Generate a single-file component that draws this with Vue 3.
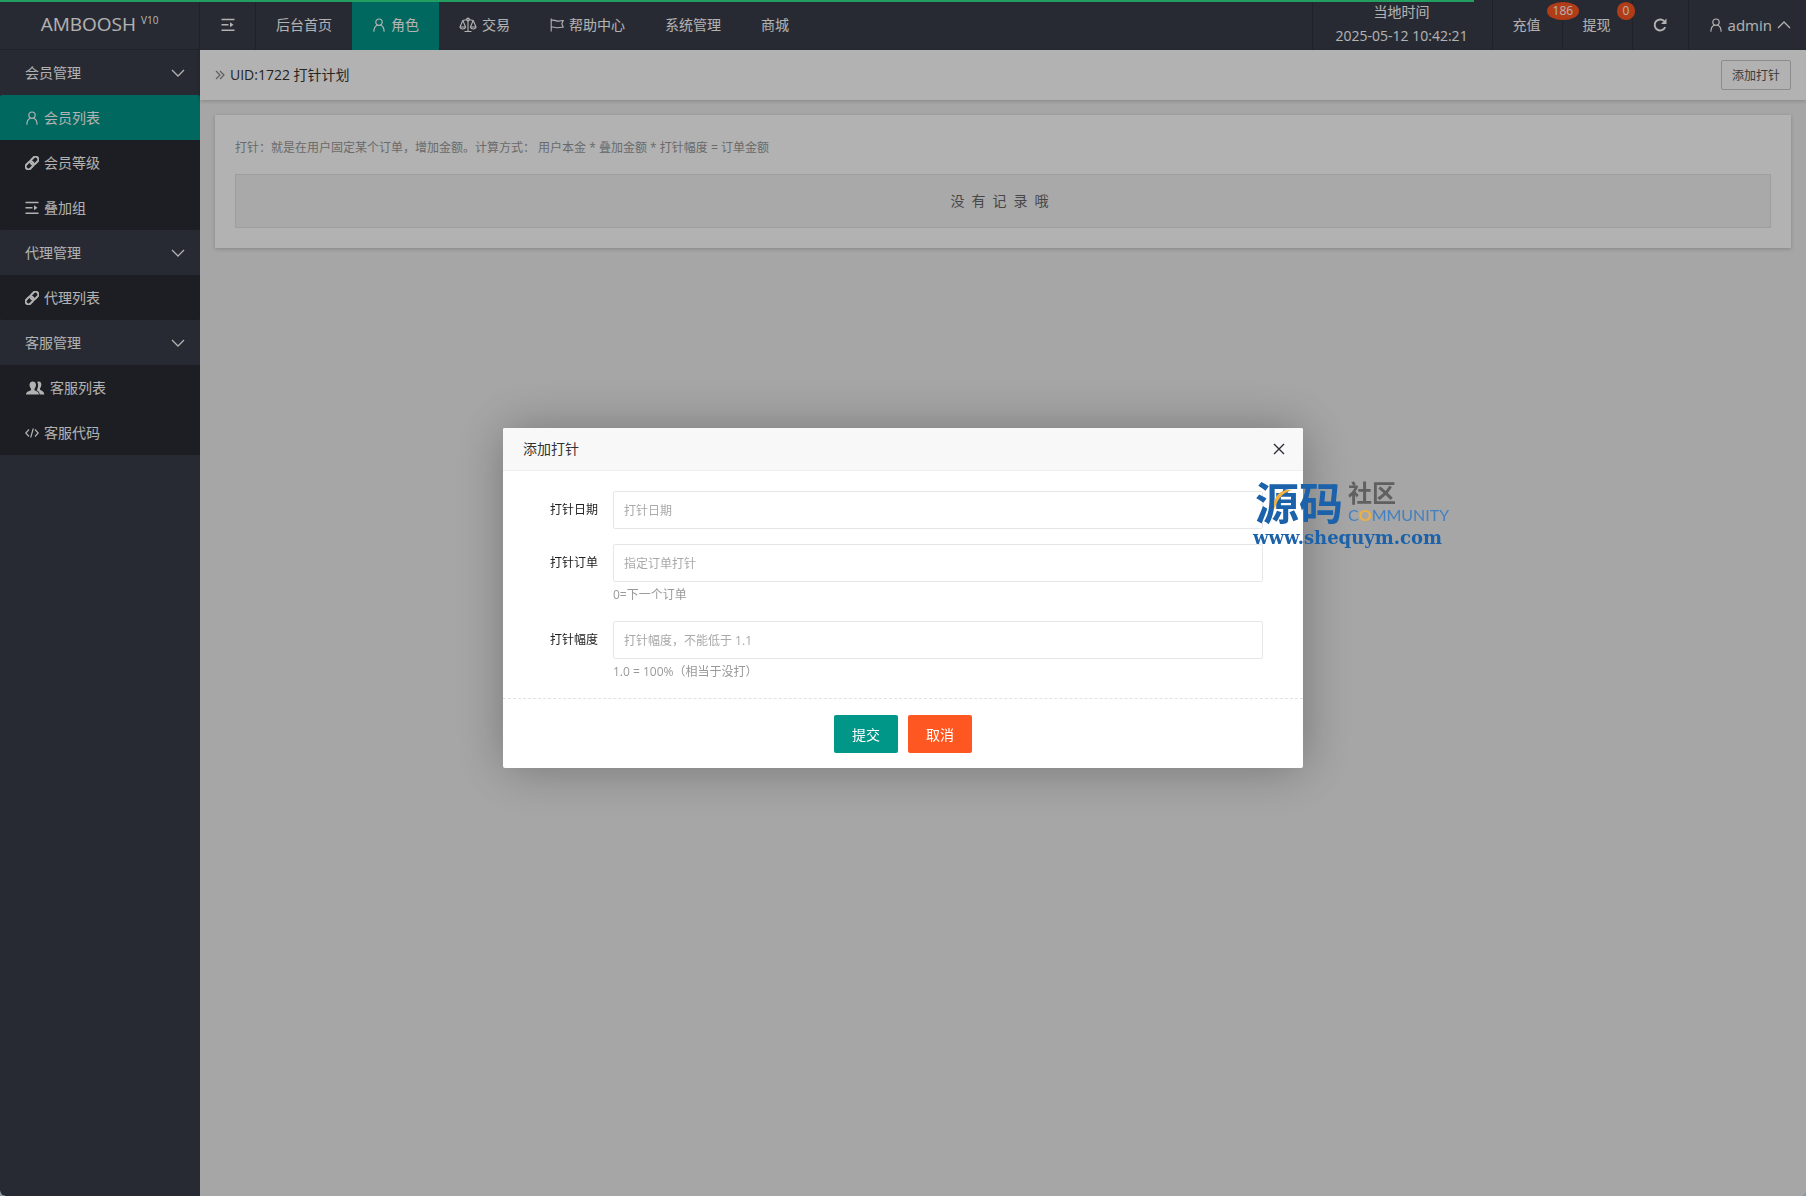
<script setup>
import { ref } from 'vue'

const topNav = [
  { text: '后台首页' },
  { text: '角色', icon: 'user', active: true },
  { text: '交易', icon: 'scale' },
  { text: '帮助中心', icon: 'flag' },
  { text: '系统管理' },
  { text: '商城' }
]

const sideNav = [
  {
    title: '会员管理',
    items: [
      { text: '会员列表', icon: 'user', active: true },
      { text: '会员等级', icon: 'link' },
      { text: '叠加组', icon: 'indent' }
    ]
  },
  {
    title: '代理管理',
    items: [{ text: '代理列表', icon: 'link' }]
  },
  {
    title: '客服管理',
    items: [
      { text: '客服列表', icon: 'group' },
      { text: '客服代码', icon: 'code' }
    ]
  }
]

const fields = [
  { id: 'date', label: '打针日期', placeholder: '打针日期' },
  { id: 'order', label: '打针订单', placeholder: '指定订单打针', hint: '0=下一个订单' },
  { id: 'rate', label: '打针幅度', placeholder: '打针幅度，不能低于 1.1', hint: '1.0 = 100%（相当于没打）' }
]

const form = ref({ date: '', order: '', rate: '' })
</script>

<template>
  <svg class="sprite" aria-hidden="true">
    <symbol id="i-user" viewBox="0 0 14 14">
      <g fill="none" stroke="currentColor" stroke-width="1.2">
        <circle cx="7" cy="4.2" r="3.2" />
        <path d="M5.2 7.2C3.200 8 2 10.200 1.900 13.200M8.800 7.200C10.800 8 12 10.200 12.100 13.200" stroke-linecap="round" />
      </g>
    </symbol>
    <symbol id="i-indent" viewBox="0 0 14 14">
      <path d="M.5 1.500H13.500M.5 6.800H7.500M.5 12.200H13.500" fill="none" stroke="currentColor" stroke-width="1.600" />
      <path d="M9 4.300L12.500 6.800L9 9.300Z" fill="currentColor" />
    </symbol>
    <symbol id="i-scale" viewBox="0 0 18 16">
      <g fill="none" stroke="currentColor" stroke-width="1.100" stroke-linejoin="round">
        <path d="M9 1V14M5.500 14.500H12.500M3.500 3.500L7.500 2.800M14.500 3.500L10.500 2.800" />
        <circle cx="9" cy="2.500" r="1.400" />
        <path d="M3.800 3.500L1 10H6.600ZM14.200 3.500L11.400 10H17Z" />
        <path d="M1 10Q1.500 12 3.800 12T6.600 10M11.400 10Q12 12 14.200 12T17 10" />
      </g>
    </symbol>
    <symbol id="i-flag" viewBox="0 0 14 14">
      <path d="M1.200 .5V13.500M1.500 2.500C4.500 1 6.500 4 9.500 3Q11.500 2.300 13.300 2.500L11.800 5.800L13.300 9.300C9.500 8.700 8.500 10.500 5.500 9.500Q3 8.600 1.500 9.200" fill="none" stroke="currentColor" stroke-width="1.100" stroke-linejoin="round" />
    </symbol>
    <symbol id="i-link" viewBox="0 0 14 14">
      <g fill="none" stroke="currentColor" stroke-width="2" transform="rotate(-45 7 7)">
        <rect x="-.8" y="4.200" width="8.800" height="5.600" rx="2.800" />
        <rect x="6" y="4.200" width="8.800" height="5.600" rx="2.800" />
      </g>
    </symbol>
    <symbol id="i-group" viewBox="0 0 20 14">
      <g fill="currentColor">
        <path d="M12.200 1C14.500 -.3 16.600 1.200 16.300 4C16.200 5.600 15.600 6.500 15 7.400V8.600C16 9.800 19 10 19.300 13.500H14.700C14.500 11.200 13.300 10.200 11.600 9.300C13 7 13.800 3.500 12.200 1Z" />
        <path d="M4.500 4C4.300 -.8 11.200 -.8 11 4C10.900 5.800 10.200 7 9.500 7.800V9C10.500 10.200 13.700 10 14 13.500H1C1.300 10 5 10.200 6 9V7.800C5.300 7 4.600 5.800 4.500 4Z" />
      </g>
    </symbol>
    <symbol id="i-code" viewBox="0 0 14 14">
      <path d="M4 3.500L.8 7L4 10.500M10 3.500L13.200 7L10 10.500M8.300 2.500L5.700 11.500" fill="none" stroke="currentColor" stroke-width="1.200" />
    </symbol>
    <symbol id="i-refresh" viewBox="0 0 14 14">
      <path d="M12.200 9.200A5.500 5.500 0 1 1 11.200 3.200" fill="none" stroke="currentColor" stroke-width="1.900" />
      <path d="M13.500 .5V6H8Z" fill="currentColor" />
    </symbol>
    <symbol id="i-down" viewBox="0 0 14 14">
      <path d="M1 4L7 10L13 4" fill="none" stroke="currentColor" stroke-width="1.300" />
    </symbol>
    <symbol id="i-up" viewBox="0 0 14 14">
      <path d="M1 10L7 4L13 10" fill="none" stroke="currentColor" stroke-width="1.300" />
    </symbol>
  </svg>

  <div class="admin">
    <aside class="side">
      <a class="logo" href="#">AMBOOSH <sup>V10</sup></a>
      <nav>
        <section v-for="group in sideNav" :key="group.title">
          <button type="button" class="side-title">
            {{ group.title }}
            <svg class="icon"><use href="#i-down" /></svg>
          </button>
          <div class="side-items">
            <a v-for="item in group.items" :key="item.text" href="#" class="side-link" :class="{ active: item.active }">
              <svg class="icon" :class="item.icon"><use :href="'#i-' + item.icon" /></svg>
              {{ item.text }}
            </a>
          </div>
        </section>
      </nav>
    </aside>

    <div class="main">
      <header class="header">
        <button type="button" class="toggle" aria-label="menu">
          <svg class="icon"><use href="#i-indent" /></svg>
        </button>
        <nav class="top-nav">
          <a v-for="item in topNav" :key="item.text" href="#" class="top-link" :class="{ active: item.active }">
            <svg v-if="item.icon" class="icon" :class="item.icon"><use :href="'#i-' + item.icon" /></svg>
            {{ item.text }}
          </a>
        </nav>
        <div class="tools">
          <div class="tool clock">
            <span>当地时间</span>
            <time>2025-05-12 10:42:21</time>
          </div>
          <a href="#" class="tool">充值<span class="badge">186</span></a>
          <a href="#" class="tool">提现<span class="badge">0</span></a>
          <button type="button" class="tool" aria-label="refresh">
            <svg class="icon"><use href="#i-refresh" /></svg>
          </button>
          <a href="#" class="tool account">
            <svg class="icon"><use href="#i-user" /></svg>
            admin
            <svg class="icon"><use href="#i-up" /></svg>
          </a>
        </div>
      </header>

      <div class="title-bar">
        <h1>
          <svg class="arrows" viewBox="0 0 10 10"><path d="M1 1L5 5L1 9M5 1L9 5L5 9" /></svg>
          UID:1722 打针计划
        </h1>
        <button type="button" class="add">添加打针</button>
      </div>

      <section class="panel">
        <p class="note">打针：就是在用户固定某个订单，增加金额。计算方式： 用户本金 * 叠加金额 * 打针幅度 = 订单金额</p>
        <div class="empty">没有记录哦</div>
      </section>
    </div>

    <div class="shade">
      <div class="dialog" role="dialog" aria-labelledby="dialog-title">
        <div class="dialog-head">
          <h2 id="dialog-title">添加打针</h2>
          <button type="button" class="close" aria-label="close">
            <svg viewBox="0 0 12 12"><path d="M1 1L11 11M11 1L1 11" /></svg>
          </button>
        </div>
        <form @submit.prevent>
          <div class="fields">
            <div v-for="f in fields" :key="f.id" class="field">
              <label :for="f.id">{{ f.label }}</label>
              <div class="control">
                <input :id="f.id" v-model="form[f.id]" type="text" :placeholder="f.placeholder">
                <p v-if="f.hint" class="hint">{{ f.hint }}</p>
              </div>
            </div>
          </div>
          <div class="actions">
            <button type="submit" class="btn">提交</button>
            <button type="button" class="btn danger">取消</button>
          </div>
        </form>

        <div class="watermark">
          <div class="mark-row">
            <strong class="mark-name">源码</strong>
            <div class="mark-side">
              <span class="mark-sub">社区</span>
              <span class="mark-en">C<b>O</b>MMUNITY</span>
            </div>
          </div>
          <span class="mark-url">www.shequym.com</span>
          <svg class="swoosh" viewBox="0 0 24 24"><path d="M20 2C7 0 -1 12 3 22C3.500 14 9 5 20 2Z" /></svg>
        </div>
      </div>
    </div>
    <div class="progress"></div>
  </div>
</template>

<style>
body {
  margin: 0;
  background: #8796a3;
}
</style>

<style scoped>
.sprite { position: absolute; width: 0; height: 0; }

.admin {
  position: relative;
  display: flex;
  min-height: 100vh;
  overflow: hidden;
  border-radius: 0 0 6px 6px;
  background: #eee;
  color: #333;
  font: 14px/24px "Open Sans", "Noto Sans CJK SC", sans-serif;
}

a { color: inherit; text-decoration: none; }
button, input { font-family: inherit; }
h1, h2, p { margin: 0; font-weight: 400; }
.icon { flex: none; width: 14px; height: 14px; }
.icon.scale { width: 18px; height: 16px; }
.icon.group { width: 20px; }

/* sidebar */
.side { flex: none; width: 200px; background: #393d49; color: #fff; }
.logo {
  display: block;
  box-sizing: border-box;
  height: 50px;
  border-right: 1px solid #2f323c;
  border-bottom: 1px solid #2f323c;
  font-size: 19px;
  line-height: 48px;
  text-align: center;
}
.logo sup { font-size: 10px; line-height: 0; }
.side-title {
  display: flex;
  align-items: center;
  justify-content: space-between;
  width: 100%;
  height: 45px;
  padding: 0 15px 0 25px;
  border: 0;
  background: none;
  color: inherit;
  font-size: 14px;
  line-height: 24px;
}
.side-items { border-radius: 2px; background: #292b33; overflow: hidden; }
.side-link {
  display: flex;
  align-items: center;
  gap: 5px;
  height: 45px;
  padding-left: 25px;
}
.active { background: #009688; }

/* top bar */
.main { flex: 1; min-width: 0; }
.header { display: flex; height: 50px; background: #393d49; color: #fff; }
.toggle {
  display: flex;
  align-items: center;
  justify-content: center;
  width: 56px;
  border: 0;
  border-right: 1px solid #2f323c;
  background: none;
  color: inherit;
}
.top-nav { display: flex; }
.top-link {
  display: flex;
  align-items: center;
  gap: 5px;
  padding: 0 20px;
}
.tools { display: flex; margin-left: auto; }
.tool {
  position: relative;
  display: flex;
  align-items: center;
  gap: 5px;
  padding: 0 21px 0 20px;
  border: 0;
  border-left: 1px solid #2f323c;
  background: none;
  color: inherit;
}
.clock { display: block; min-width: 138px; text-align: center; }
.clock span, .clock time { display: block; }
.account { padding-right: 15px; font-size: 15px; }
.badge {
  position: absolute;
  top: 2px;
  left: 54px;
  z-index: 1;
  padding: 0 6px;
  border-radius: 50%;
  background: #ff5722;
  font-size: 12px;
  line-height: 18px;
}

/* page */
.title-bar {
  display: flex;
  align-items: center;
  justify-content: space-between;
  height: 50px;
  padding: 0 15px;
  background: #fff;
  box-shadow: 0 1px 4px rgba(0, 0, 0, .2);
}
.title-bar h1 { display: flex; align-items: center; gap: 5px; font-size: 14px; }
.arrows { width: 10px; height: 10px; fill: none; stroke: #888; stroke-width: 1.2; }
.add {
  height: 30px;
  padding: 0 10px;
  border: 1px solid #c9c9c9;
  border-radius: 2px;
  background: #fff;
  color: #555;
  font-size: 12px;
}
.panel {
  margin: 15px;
  padding: 20px;
  background: #fff;
  box-shadow: 0 1px 4px rgba(0, 0, 0, .2);
}
.note { margin-bottom: 13px; color: #999; font-size: 12px; line-height: 26px; }
.empty {
  border: 1px solid #e2e2e2;
  background: #f2f2f2;
  color: #666;
  letter-spacing: 7px;
  line-height: 52px;
  text-align: center;
}

/* dialog */
.shade {
  position: fixed;
  inset: 0;
  z-index: 10;
  display: flex;
  align-items: center;
  justify-content: center;
  border-radius: 0 0 6px 6px;
  background: rgba(0, 0, 0, .3);
}
.dialog {
  position: relative;
  width: 800px;
  border-radius: 2px;
  background: #fff;
  box-shadow: 1px 1px 50px rgba(0, 0, 0, .3);
}
.dialog-head {
  display: flex;
  align-items: center;
  justify-content: space-between;
  height: 42px;
  padding: 0 16px 0 20px;
  border-bottom: 1px solid #eee;
  border-radius: 2px 2px 0 0;
  background: #f8f8f8;
}
.dialog-head h2 { font-size: 14px; }
.close { display: flex; padding: 2px; border: 0; background: none; }
.close svg { width: 12px; height: 12px; fill: none; stroke: #2e2d3c; stroke-width: 1.400; }
.fields {
  display: grid;
  gap: 15px;
  padding: 20px 40px 15px;
  border-bottom: 1px dashed #e2e2e2;
}
.field { display: flex; gap: 15px; }
.field label {
  width: 55px;
  color: #222;
  font-size: 12px;
  line-height: 38px;
  text-align: right;
}
.control { flex: 1; }
.control input {
  display: block;
  box-sizing: border-box;
  width: 100%;
  height: 38px;
  padding: 0 10px;
  border: 1px solid #e6e6e6;
  border-radius: 2px;
  outline: 0;
  font-size: 12px;
}
.control input::placeholder { color: #a9a9a9; }
.hint { padding-top: 2px; color: #999; font-size: 12px; line-height: 22px; }
.actions { display: flex; justify-content: center; gap: 10px; padding: 16px 0 15px; }
.btn {
  height: 38px;
  padding: 0 18px;
  border: 0;
  border-radius: 2px;
  background: #009688;
  color: #fff;
  font-size: 14px;
}
.btn.danger { background: #ff5722; }

/* site stamp over the dialog edge */
.watermark {
  position: absolute;
  top: 52px;
  left: 750px;
  color: #1b62ab;
  white-space: nowrap;
  pointer-events: none;
}
.mark-row { display: flex; gap: 5px; height: 44px; padding-left: 2px; }
.mark-name { font-size: 44px; line-height: 46px; }
.mark-side { display: flex; flex-direction: column; }
.mark-sub { color: #606060; font-size: 24px; font-weight: 700; line-height: 26px; }
.mark-en { color: #4480c0; font: 16px/18px Lato, sans-serif; }
.mark-en b { color: #f0b040; }
.mark-url { display: block; font: bold 18px/28px "DejaVu Serif", serif; }
.swoosh { position: absolute; top: 8px; left: 19px; width: 24px; height: 24px; fill: #f3b23c; }

.progress {
  position: absolute;
  top: 0;
  left: 0;
  z-index: 11;
  width: 1474px;
  max-width: 100%;
  height: 2px;
  background: #229f60;
}
</style>
